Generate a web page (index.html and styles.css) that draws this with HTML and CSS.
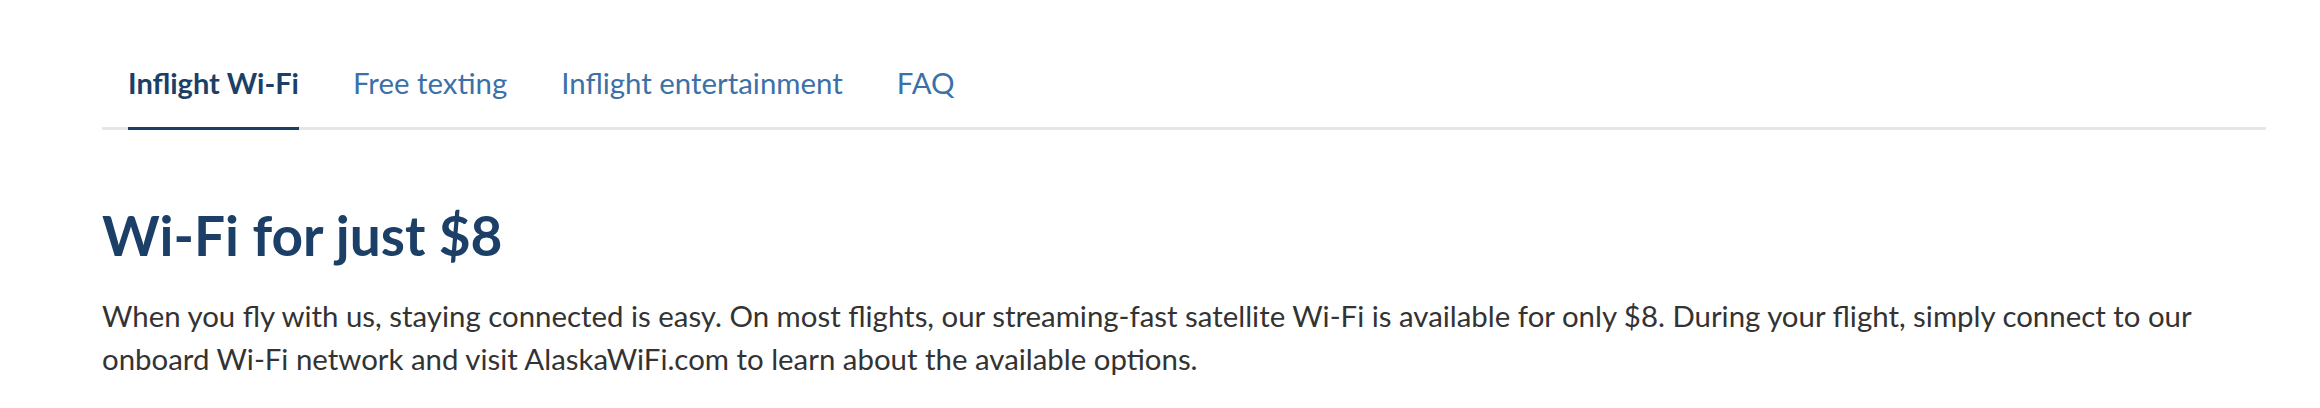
FILE: index.html
```html
<!DOCTYPE html>
<html lang="en">
<head>
<meta charset="utf-8">
<title>Inflight Wi-Fi</title>
<link rel="stylesheet" href="styles.css">
</head>
<body>
<div class="page">
  <nav class="tabs">
    <a class="tab active" href="#">Inflight Wi-Fi</a>
    <a class="tab" href="#">Free texting</a>
    <a class="tab" href="#">Inflight entertainment</a>
    <a class="tab" href="#">FAQ</a>
  </nav>
  <section class="content">
    <h1 class="title">Wi-Fi for just $8</h1>
    <p class="lead">When you fly with us, staying connected is easy. On most flights, our streaming-fast satellite Wi-Fi is available for only $8. During your flight, simply connect to our onboard Wi-Fi network and visit AlaskaWiFi.com to learn about the available options.</p>
  </section>
</div>
</body>
</html>
```
FILE: styles.css
```css
html, body {
  margin: 0;
  padding: 0;
  background: #ffffff;
}
body {
  font-family: "Lato", "Liberation Sans", sans-serif;
  width: 2320px;
  height: 408px;
  overflow: hidden;
}
.page {
  padding: 0 54px 0 102px;
}
.tabs {
  display: flex;
  align-items: flex-end;
  gap: 54px;
  padding: 63px 0 0 26px;
  border-bottom: 3px solid #e6e6e6;
}
.tab {
  display: block;
  font-size: 29.4px;
  line-height: 40px;
  padding: 0 0 24px;
  color: #3c70a8;
  text-decoration: none;
  margin-bottom: -3px;
  border-bottom: 3px solid transparent;
}
.tab.active {
  font-size: 29px;
  color: #1b3f66;
  font-weight: 700;
  border-bottom-color: #1b3f66;
}
.content {
  padding-top: 71px;
}
.title {
  margin: 0;
  font-size: 55px;
  line-height: 68px;
  font-weight: 700;
  color: #1b3f66;
}
.lead {
  margin: 25px 0 0;
  font-size: 29.4px;
  line-height: 43px;
  color: #333333;
}
```
